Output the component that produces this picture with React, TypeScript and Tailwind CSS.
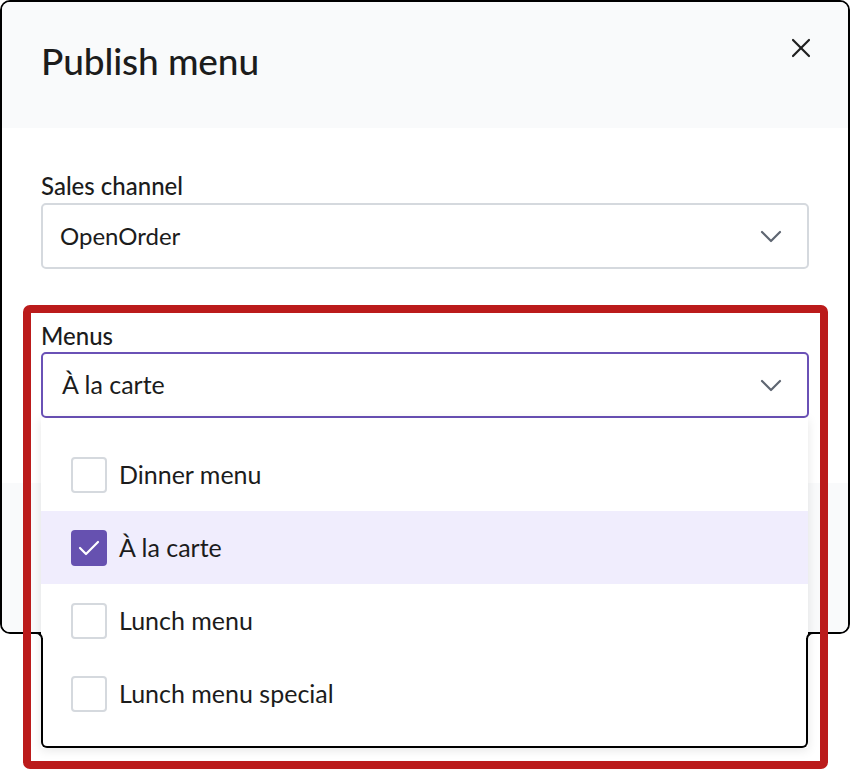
import React from "react";

function Chevron() {
  return (
    <svg width="22" height="13" viewBox="0 0 22 13" fill="none" className="shrink-0">
      <polyline points="2,2 11,11 20,2" stroke="#5f6672" strokeWidth="2.2" strokeLinecap="round" strokeLinejoin="round" />
    </svg>
  );
}

function CloseIcon() {
  return (
    <svg width="20" height="20" viewBox="0 0 20 20" fill="none">
      <line x1="2" y1="2" x2="18" y2="18" stroke="#1f1f1f" strokeWidth="2.2" strokeLinecap="round" />
      <line x1="18" y1="2" x2="2" y2="18" stroke="#1f1f1f" strokeWidth="2.2" strokeLinecap="round" />
    </svg>
  );
}

function Checkbox({ checked }: { checked: boolean }) {
  if (checked) {
    return (
      <div className="w-[36px] h-[36px] rounded-[4px] bg-[#6651b0] flex items-center justify-center shrink-0">
        <svg width="36" height="36" viewBox="0 0 36 36" fill="none">
          <polyline points="9,18 15,24 27,12" stroke="#ffffff" strokeWidth="2.2" strokeLinecap="round" strokeLinejoin="round" />
        </svg>
      </div>
    );
  }
  return <div className="w-[36px] h-[36px] rounded-[4px] border-2 border-[#d5d9de] bg-white shrink-0" />;
}

const items = [
  { label: "Dinner menu", checked: false },
  { label: "À la carte", checked: true },
  { label: "Lunch menu", checked: false },
  { label: "Lunch menu special", checked: false },
];

export default function App() {
  return (
    <div
      className="relative w-[850px] h-[769px] bg-white overflow-hidden text-[#1c1c1c]"
      style={{ fontFamily: "Lato, 'Noto Sans', Arial, sans-serif" }}
    >
      {/* Dialog */}
      <div className="w-[850px] h-[634px] border-2 border-black rounded-[10px] overflow-hidden flex flex-col bg-white">
        <div className="h-[126px] bg-[#f9fafb] flex justify-between pl-[39px] pr-[37px] shrink-0">
          <h1 className="self-center text-[37px] leading-none font-medium tracking-[-0.1px] pb-[9px]">Publish menu</h1>
          <div className="mt-[36px]">
            <CloseIcon />
          </div>
        </div>
        <div className="h-[355px] px-[39px] pt-[44px] shrink-0">
          <div className="text-[24px] leading-[28px] font-medium">Sales channel</div>
          <div className="mt-[3px] h-[66px] border-2 border-[#d5d9de] rounded-[5px] flex items-center justify-between pl-[17px] pr-[25px]">
            <span className="text-[24px]">OpenOrder</span>
            <Chevron />
          </div>
          <div className="mt-[53px] text-[24px] leading-[28px] font-medium">Menus</div>
          <div className="mt-[2px] h-[66px] border-2 border-[#6a51b6] rounded-[5px] flex items-center justify-between pl-[19px] pr-[25px]">
            <span className="text-[25px]">À la carte</span>
            <Chevron />
          </div>
        </div>
        <div className="flex-1 bg-[#f9fafb]" />
      </div>

      {/* Dropdown panel */}
      <div className="absolute left-[41px] top-[418px] w-[767px] h-[330px] bg-white z-10 shadow-[0_2px_10px_rgba(0,0,0,0.10)] pt-[20px]">
        {items.map((it) => (
          <div
            key={it.label}
            className={`h-[73px] flex items-center gap-[12px] pl-[30px] ${it.checked ? "bg-[#f0edfd]" : ""}`}
          >
            <Checkbox checked={it.checked} />
            <span className="text-[25px]">{it.label}</span>
          </div>
        ))}
      </div>

      {/* Outline of the dropdown part below the dialog */}
      <div className="absolute left-[41px] top-[638px] w-[767px] h-[110px] border-x-2 border-b-2 border-black rounded-b-[6px] z-20 pointer-events-none" />
      <div className="absolute left-[33px] top-[632px] w-[10px] h-[10px] border-t-2 border-r-2 border-black rounded-tr-[7px] z-20 pointer-events-none" />
      <div className="absolute left-[806px] top-[632px] w-[10px] h-[10px] border-t-2 border-l-2 border-black rounded-tl-[7px] z-20 pointer-events-none" />

      {/* Red annotation */}
      <div className="absolute left-[23px] top-[305px] w-[805px] h-[464px] border-[8px] border-[#bb1b1b] rounded-[7px] z-30 pointer-events-none" />
    </div>
  );
}
